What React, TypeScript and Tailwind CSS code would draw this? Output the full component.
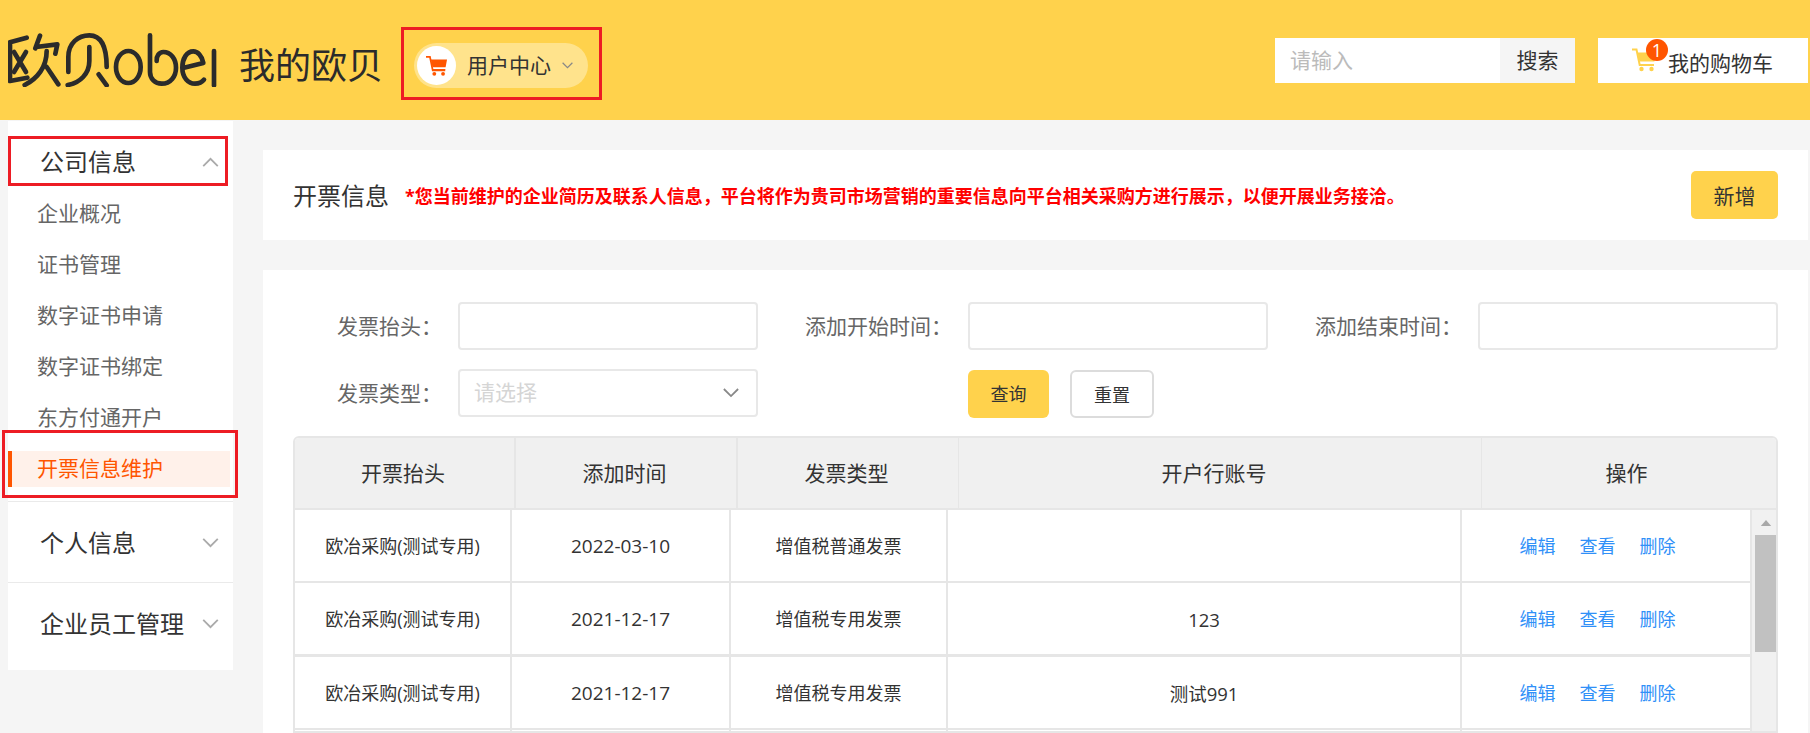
const sideItems = ['企业概况', '证书管理', '数字证书申请', '数字证书绑定', '东方付通开户'];

const rows = [
  { title: '欧冶采购(测试专用)', date: '2022-03-10', type: '增值税普通发票', account: '' },
  { title: '欧冶采购(测试专用)', date: '2021-12-17', type: '增值税专用发票', account: '123' },
  { title: '欧冶采购(测试专用)', date: '2021-12-17', type: '增值税专用发票', account: '测试991' },
];

function Chevron({ up = false, className = '' }: { up?: boolean; className?: string }) {
  return (
    <svg viewBox="0 0 18 11" fill="none" stroke="currentColor" strokeWidth="2" className={className}>
      <path d={up ? 'M1 10l8-8 8 8' : 'M1 1l8 8 8-8'} />
    </svg>
  );
}

function Cart({ stripes = false, className = '' }: { stripes?: boolean; className?: string }) {
  return (
    <svg viewBox="0 0 24 24" fill="currentColor" className={className}>
      <path d="M0 2h4.5l3.2 15.5H22" fill="none" stroke="currentColor" strokeWidth="2" />
      <path d="M5.5 5H24l-1.6 9H7.4z" />
      {stripes && <path d="M8 16h14v1.2H8z" />}
      <circle cx="9.5" cy="21.5" r="2.2" />
      <circle cx="19.5" cy="21.5" r="2.2" />
    </svg>
  );
}

function Logo() {
  return (
    <svg viewBox="24 88 630 162" fill="none" stroke="#2b2b2b" strokeWidth="14" strokeLinecap="round" strokeLinejoin="round" className="w-[210px] h-[54px] shrink-0">
      <path d="M80 102L30 116V232L82 222" />
      <path d="M42 145L78 205M78 145L42 205" />
      <path d="M120 96L106 134M108 130L172 122L166 150" />
      <path d="M140 142C140 190 112 225 74 244M140 190L175 242" />
      <path d="M205 205V160C205 118 235 95 268 95C302 95 320 125 320 190" />
      <path d="M268 130V172C268 210 240 238 203 244M296 212L320 245" />
      <ellipse cx="385" cy="190" rx="37" ry="48" />
      <path d="M450 95V205C450 225 465 240 485 240C512 240 528 218 528 192C528 165 512 145 490 145C478 145 468 158 470 172" />
      <path d="M552 192L610 178C606 155 592 143 580 143C560 143 547 165 547 192C547 222 565 240 585 240C596 240 606 236 612 228" />
      <path d="M642 142V245" />
    </svg>
  );
}

function Field({ label, children }: { label: string; children?: React.ReactNode }) {
  return (
    <div className="flex items-center">
      <label className="w-[165px] pr-[16px] pt-[2px] text-right text-[21px] text-[#666]">{label}</label>
      {children ?? <input className="w-[300px] h-[48px] rounded-[4px] border-2 border-[#e8e8e8] bg-white" />}
    </div>
  );
}

function TableRow({ title, date, type, account, thick }: { title?: string; date?: string; type?: string; account?: string; thick?: boolean }) {
  return (
    <div className={`grid grid-cols-[217px_219px_217px_514px_290px] shrink-0 border-b-[#e6e6e6] text-[18px] text-[#333] ${thick ? 'h-[74px] border-b-[3px]' : 'h-[73px] border-b-2'}`}>
      <div className="flex items-center justify-center pt-[2px] border-r-2 border-[#e6e6e6]">{title}</div>
      <div className="flex items-center justify-center pt-[2px] border-r-2 border-[#e6e6e6] text-[19px]">{date}</div>
      <div className="flex items-center justify-center pt-[2px] border-r-2 border-[#e6e6e6]">{type}</div>
      <div className="flex items-center justify-center pt-[2px] border-r-2 border-[#e6e6e6] text-[18.5px]">{account}</div>
      <div className="flex items-center justify-center gap-[24px] pt-[2px] pr-[17px] border-r-2 border-[#e6e6e6] text-[#3090f8]">
        {title && (
          <>
            <span>编辑</span>
            <span>查看</span>
            <span>删除</span>
          </>
        )}
      </div>
    </div>
  );
}

export default function App() {
  return (
    <div className="h-[733px] overflow-hidden bg-[#f5f5f5] font-['Open_Sans','Noto_Sans_CJK_SC',sans-serif] flex flex-col">
      <header className="h-[120px] shrink-0 bg-[#ffd24c] flex items-center pl-[8px] pr-[2px]">
        <Logo />
        <h1 className="ml-[21px] mt-[11px] text-[36px] leading-none text-[#2b2b2b]">我的欧贝</h1>
        <div className="ml-[18px] mt-[7px] w-[201px] h-[73px] border-[3px] border-[#ed1c24] flex items-center pl-[10px] pt-[4px]">
          <div className="w-[174px] h-[45px] rounded-full bg-[#ffe38c] flex items-center pl-[3px]">
            <div className="w-[39px] h-[39px] rounded-full bg-white flex items-center justify-center">
              <Cart stripes className="w-[21px] h-[21px] text-[#ff5500]" />
            </div>
            <span className="ml-[11px] text-[21px] text-[#333]">用户中心</span>
            <Chevron className="ml-[11px] w-[11px] h-[7px] text-[#888]" />
          </div>
        </div>
        <div className="ml-auto flex">
          <div className="w-[225px] h-[45px] bg-white pl-[15px] pt-[2px] flex items-center text-[21px] text-[#bbb]">请输入</div>
          <div className="w-[75px] h-[45px] bg-[#f5f5f5] pt-[2px] flex items-center justify-center text-[21px] text-[#333]">搜索</div>
          <div className="ml-[23px] w-[210px] h-[45px] bg-white flex items-center pl-[34px]">
            <div className="relative">
              <Cart className="w-[24px] h-[25px] mt-[-1px] text-[#ffd24c]" />
              <span className="absolute left-[14px] top-[-9px] w-[22px] h-[22px] rounded-full bg-[#ff5500] text-white text-[18px] leading-[22px] text-center">1</span>
            </div>
            <span className="ml-[12px] pt-[8px] text-[21px] text-[#333]">我的购物车</span>
          </div>
        </div>
      </header>

      <div className="flex flex-1 min-h-0">
        <aside className="ml-[8px] mt-[1px] w-[225px] shrink-0 self-start bg-white pt-[15px] pb-[7px]">
          <div className="h-[50px] w-[220px] border-[3px] border-[#ed1c24] flex items-center justify-between pl-[29px] pr-[6px] pt-[2px] text-[24px] text-[#333]">
            <span>公司信息</span>
            <Chevron up className="w-[17px] h-[10px] text-[#aaa]" />
          </div>
          <ul className="mt-[2px] text-[21px] text-[#666]">
            {sideItems.map((item) => (
              <li key={item} className="h-[51px] flex items-center pl-[29px]">{item}</li>
            ))}
            <li className="relative h-[51px] flex items-center">
              <div className="w-[222px] h-[36px] flex items-center bg-[#fff1ea] border-l-4 border-[#ff5500] pl-[25px] text-[#ff5500]">开票信息维护</div>
              <div className="absolute left-[-6px] top-[-13px] w-[236px] h-[68px] border-[3px] border-[#ed1c24]" />
            </li>
          </ul>
          <div className="mt-[7px] h-[81px] border-t border-[#eaeaea] flex items-center justify-between pl-[32px] pr-[14px] pt-[2px] text-[24px] text-[#333]">
            <span>个人信息</span>
            <Chevron className="w-[17px] h-[10px] text-[#aaa]" />
          </div>
          <div className="h-[81px] border-t border-[#eaeaea] flex items-center justify-between pl-[32px] pr-[14px] pt-[2px] text-[24px] text-[#333]">
            <span>企业员工管理</span>
            <Chevron className="w-[17px] h-[10px] text-[#aaa]" />
          </div>
        </aside>

        <main className="ml-[30px] mr-[2px] flex-1 min-w-0 pt-[30px] flex flex-col">
          <section className="h-[90px] shrink-0 bg-white flex items-center px-[30px]">
            <h2 className="text-[24px] pt-[1px] text-[#333]">开票信息</h2>
            <p className="ml-[16px] pt-[3px] text-[18px] font-bold text-[#ff0000]">*您当前维护的企业简历及联系人信息，平台将作为贵司市场营销的重要信息向平台相关采购方进行展示，以便开展业务接洽。</p>
            <button className="ml-auto w-[87px] h-[48px] pt-[3px] rounded-[5px] bg-[#ffd24c] text-[21px] text-[#333]">新增</button>
          </section>

          <section className="mt-[30px] flex-1 min-h-0 bg-white px-[30px] pt-[32px] flex flex-col">
            <div className="grid grid-cols-[465px_465px_465px] gap-x-[45px] gap-y-[18px] shrink-0">
              <Field label="发票抬头：" />
              <Field label="添加开始时间：" />
              <Field label="添加结束时间：" />
              <Field label="发票类型：">
                <div className="w-[300px] h-[48px] rounded-[4px] border-2 border-[#e8e8e8] flex items-center justify-between pl-[14px] pr-[17px] text-[21px] text-[#d5d5d5]">
                  <span>请选择</span>
                  <Chevron className="w-[16px] h-[10px] text-[#888]" />
                </div>
              </Field>
              <div className="flex items-center self-start pt-[2px] pl-[165px] gap-[21px]">
                <button className="w-[81px] h-[48px] rounded-[6px] bg-[#ffd24c] text-[18px] text-[#333]">查询</button>
                <button className="w-[84px] h-[48px] pt-[2px] rounded-[6px] border-2 border-[#dcdcdc] bg-white text-[18px] text-[#333]">重置</button>
              </div>
            </div>

            <div className="mt-[18px] flex-1 min-h-0 overflow-hidden rounded-t-[6px] border-2 border-[#e6e6e6]">
              <div className="grid grid-cols-[221px_222px_221px_523px_1fr] h-[72px] bg-[#f0f0f0] border-b-2 border-[#e6e6e6] text-[21px] text-[#333]">
                <div className="flex items-center justify-center pr-[3px] pt-[2px] border-r-2 border-[#e6e6e6]">开票抬头</div>
                <div className="flex items-center justify-center pr-[3px] pt-[2px] border-r-2 border-[#e6e6e6]">添加时间</div>
                <div className="flex items-center justify-center pr-[3px] pt-[2px] border-r border-[#e6e6e6]">发票类型</div>
                <div className="flex items-center justify-center pr-[12px] pt-[2px] border-r border-[#e6e6e6]">开户行账号</div>
                <div className="flex items-center justify-center pr-[5px] pt-[2px]">操作</div>
              </div>
              <div className="flex h-full">
                <div className="flex flex-col">
                  {rows.map((row, i) => (
                    <TableRow key={i} {...row} thick={i === 1} />
                  ))}
                  <TableRow />
                </div>
                <div className="ml-auto w-[24px] bg-[#f1f1f1] pl-[3px]">
                  <svg viewBox="0 0 12 7" fill="#a8a8a8" className="mx-auto mt-[10px] w-[12px] h-[6px]">
                    <path d="M6 0l6 7H0z" />
                  </svg>
                  <div className="mt-[9px] h-[117px] bg-[#c1c1c1]" />
                </div>
              </div>
            </div>
          </section>
        </main>
      </div>
    </div>
  );
}
